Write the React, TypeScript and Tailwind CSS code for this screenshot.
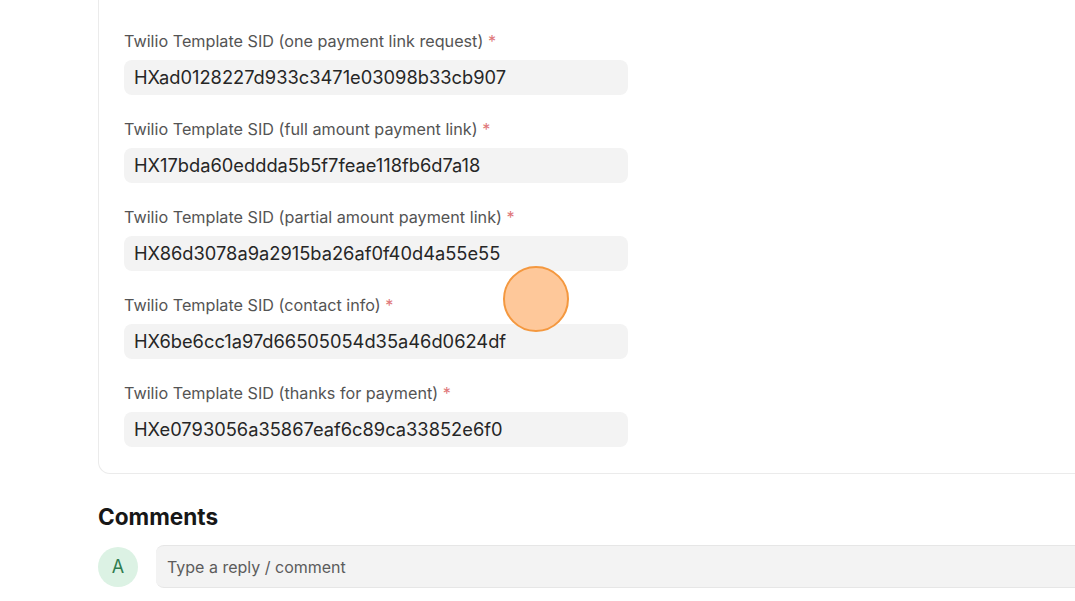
const FIELDS = [
  { label: 'Twilio Template SID (one payment link request)', value: 'HXad0128227d933c3471e03098b33cb907' },
  { label: 'Twilio Template SID (full amount payment link)', value: 'HX17bda60eddda5b5f7feae118fb6d7a18' },
  { label: 'Twilio Template SID (partial amount payment link)', value: 'HX86d3078a9a2915ba26af0f40d4a55e55' },
  { label: 'Twilio Template SID (contact info)', value: 'HX6be6cc1a97d66505054d35a46d0624df' },
  { label: 'Twilio Template SID (thanks for payment)', value: 'HXe0793056a35867eaf6c89ca33852e6f0' },
]

export default function App() {
  return (
    <div className="relative w-[1075px] h-[601px] overflow-hidden bg-white" style={{ fontFamily: 'Inter, "Noto Sans", sans-serif' }}>
      {/* settings card */}
      <div className="ml-[98px] w-[1100px] border border-t-0 border-[#ebebeb] rounded-b-xl pl-[25px] pt-[31px] pb-[26px] flex flex-col gap-[24px]">
        {FIELDS.map((f) => (
          <div key={f.label} className="flex flex-col gap-[9px]">
            <div className="h-[20px] leading-[20px] text-[16.2px] text-[#545454]">
              {f.label} <span className="text-[#e0787a]">*</span>
            </div>
            <div className="w-[504px] h-[35px] rounded-lg bg-[#f3f3f3] pl-[10px] flex items-center text-[18.3px] text-[#262626]">
              {f.value}
            </div>
          </div>
        ))}
      </div>

      {/* comments */}
      <div className="ml-[98px] mt-[28px]">
        <h2 className="text-[22.6px] leading-[30px] font-bold text-[#171717]">Comments</h2>
        <div className="mt-[13px] flex items-center gap-[18px]">
          <div className="w-[40px] h-[40px] rounded-full bg-[#dcf2e4] flex items-center justify-center text-[18px] text-[#2f7d4f]">A</div>
          <div className="flex-1 h-[43px] bg-[#f3f3f3] border-y border-[#e6e6e6] rounded-l-lg pl-[11px] flex items-center text-[16px] text-[#5c5c5c]">
            Type a reply / comment
          </div>
        </div>
      </div>

      {/* cursor highlight */}
      <div className="absolute left-[503px] top-[266px] w-[66px] h-[66px] rounded-full bg-[#fec89a] border-2 border-[#f4983f]" />
    </div>
  )
}
